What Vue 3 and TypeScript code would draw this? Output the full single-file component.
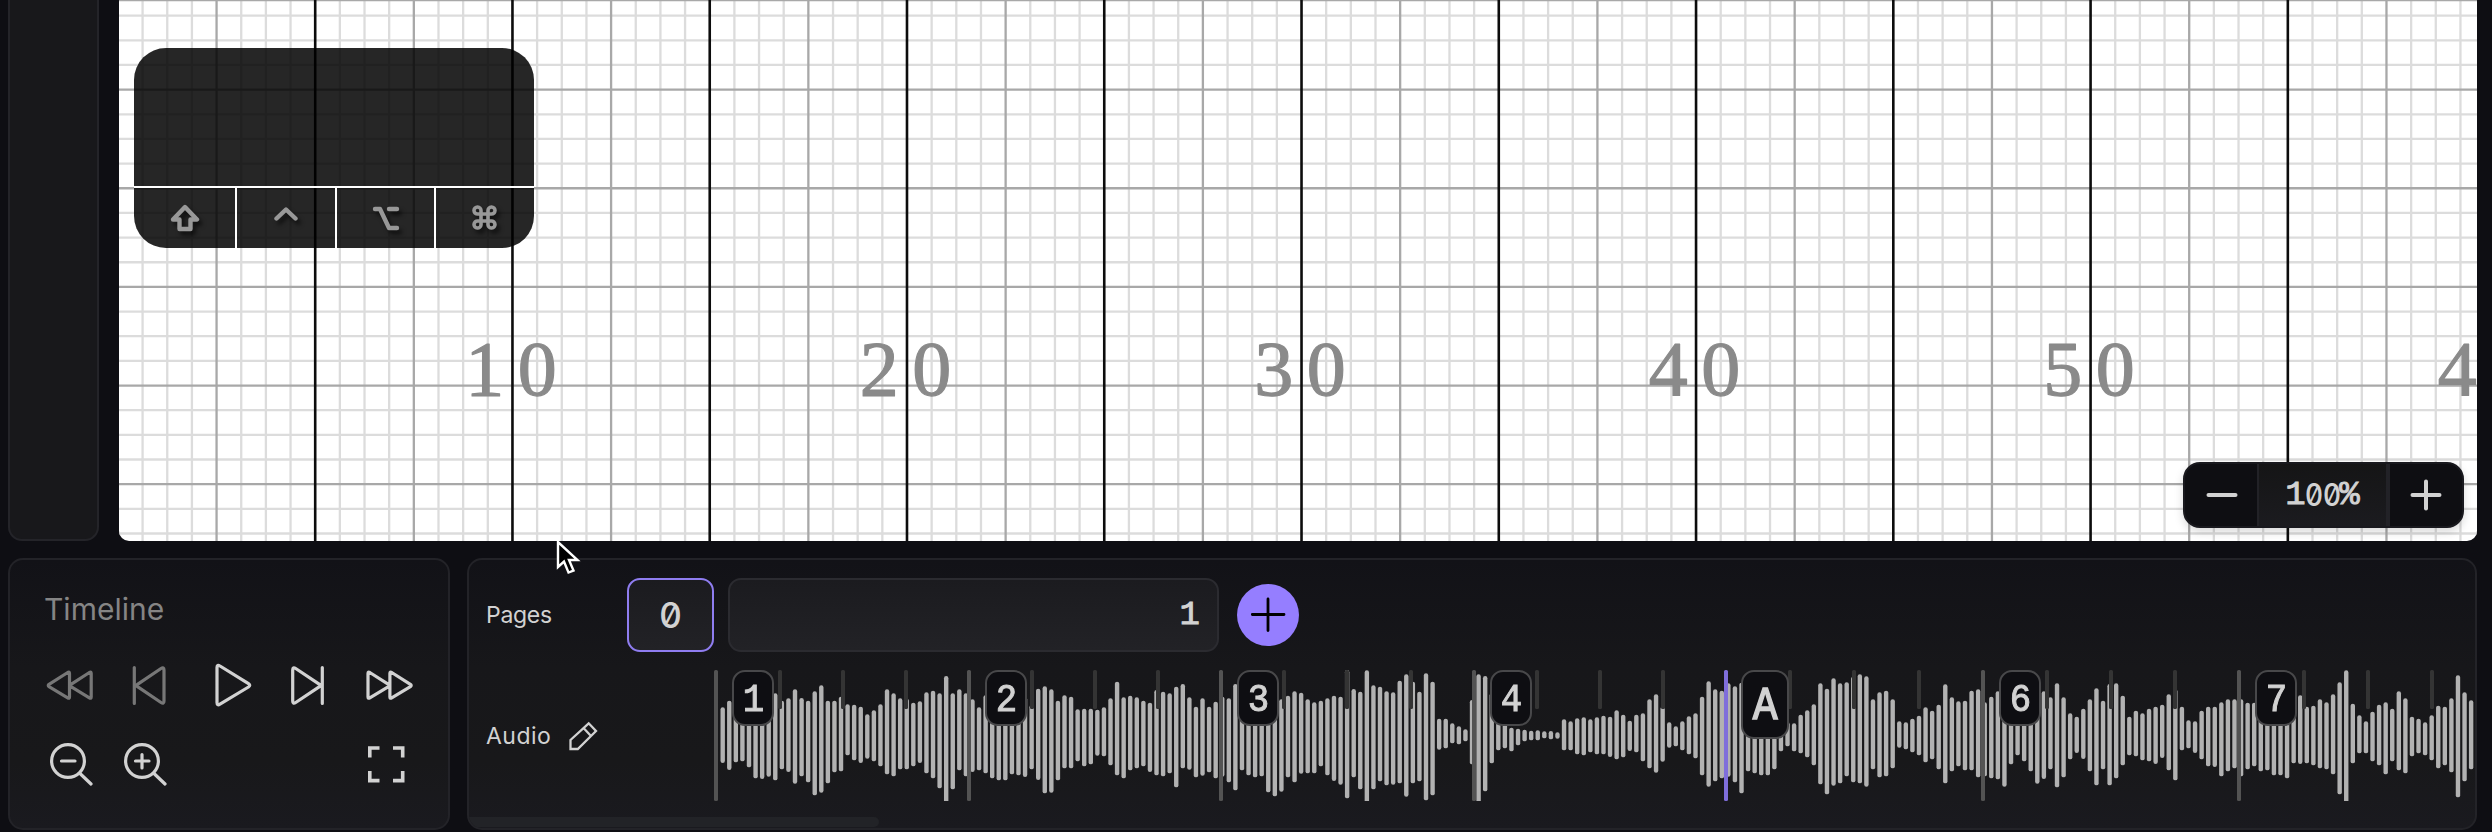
<script setup lang="ts">
interface Measure {
  x: number
  label: string
  section?: boolean
}

// Upper and lower end of every waveform bar, in thirds of a pixel.
const samples =
  '142,309 122,330 118,307 120,304 115,322 110,355 108,357 105,350 100,361 122,328 115,336 88,371 114,349 122,367 94,406 76,398 122,370 122,337 110,334 133,286 134,301 140,309 163,296 151,304 133,319 88,343 100,349 115,328 116,328 128,319 124,309 97,340 92,355 100,385 48,430 100,388 88,331 100,349 118,336 142,331 106,340 108,355 106,361 105,361 110,343 108,346 112,351 135,328 86,360 79,400 88,398 122,361 106,325 110,325 148,304 146,319 146,313 149,287 142,289 115,316 65,346 112,355 107,331 112,325 122,319 128,336 90,346 95,349 100,340 80,382 72,325 112,329 140,352 115,347 140,337 125,355 110,350 115,367 72,391 100,331 100,346 100,352 100,349 100,397 100,409 118,395 107,352 94,367 98,341 118,340 127,340 122,319 115,346 107,363 110,374 30,415 87,352 95,388 31,430 76,388 80,364 94,376 97,374 62,370 43,410 65,370 95,364 40,421 65,406 176,269 176,265 190,250 199,253 208,244 120,313 43,430 48,394 100,310 150,271 180,265 203,274 206,256 209,244 212,241 211,241 214,235 213,238 217,236 178,271 184,271 175,283 172,286 178,277 172,283 167,283 170,291 151,298 164,292 182,273 164,277 160,304 118,325 103,338 140,305 187,263 199,259 184,271 169,283 160,295 110,346 64,380 88,364 92,355 70,350 79,367 68,400 120,334 120,340 120,346 120,346 130,328 160,274 187,259 190,274 164,280 151,292 133,316 70,373 86,403 55,377 70,370 67,349 50,367 43,370 49,380 118,328 97,352 92,349 118,325 184,263 187,268 176,277 167,286 142,307 152,298 134,328 73,370 112,334 124,319 122,331 92,331 88,352 127,349 110,355 94,358 110,380 150,313 180,286 160,304 130,334 110,371 94,357 112,328 70,382 112,352 160,298 170,279 146,297 118,334 85,376 122,328 72,376 70,355 107,316 170,286 152,289 160,301 146,304 140,312 134,294 103,331 88,361 140,271 181,265 184,279 152,298 140,319 140,321 127,349 118,334 118,325 118,349 128,328 128,319 130,334 130,331 120,346 120,346 120,355 150,310 106,312 140,310 137,316 118,325 127,328 103,343 67,403 31,430 131,310 166,280 184,280 155,304 134,316 127,343 146,304 94,331 115,340 170,289 176,280 187,286 166,301 137,325 140,316 115,337 46,412 97,364 121,328'

const bars = samples.split(' ').map((pair, i) => {
  const [top, bottom] = pair.split(',').map(Number)
  return { x: 722.7 + i * 6.573 - 2.2, y: 660 + top / 3, h: (bottom - top) / 3 }
})

const measures: Measure[] = [
  { x: 716, label: '1' },
  { x: 969, label: '2' },
  { x: 1221, label: '3' },
  { x: 1474, label: '4' },
  { x: 1726, label: 'A', section: true },
  { x: 1983, label: '6' },
  { x: 2239, label: '7' },
]
const ticks = [780, 843, 906, 1032, 1095, 1158, 1284, 1347, 1411, 1537, 1600, 1663, 1790, 1854, 1919, 2047, 2111, 2175, 2304, 2368, 2432]

const step = 24.658
const columns = Array.from({ length: 97 }, (_, i) => ({
  x: 315.2 + (i - 8) * step,
  kind: i % 8 === 0 ? 'major' : i % 4 === 0 ? 'half' : 'minor',
})).filter((l) => l.x > 120)
const rows = Array.from({ length: 23 }, (_, i) => ({
  y: -9 + i * step,
  kind: i % 4 === 0 ? 'half' : 'minor',
}))
const yards = ['10', '20', '30', '40', '50', '4'].map((text, i) => ({ text, x: 465.2 + i * 394.53 }))
</script>

<template>
  <div class="app">
    <div class="upper">
      <aside class="side"></aside>
      <main class="field">
        <svg class="grid" viewBox="119 0 2358 541" width="2358" height="541">
          <line v-for="r in rows.filter((l) => l.kind === 'minor')" :key="'m' + r.y" class="minor" x1="119" x2="2478" :y1="r.y" :y2="r.y" />
          <line v-for="c in columns.filter((l) => l.kind === 'minor')" :key="'n' + c.x" class="minor" y1="0" y2="541" :x1="c.x" :x2="c.x" />
          <line v-for="r in rows.filter((l) => l.kind === 'half')" :key="'h' + r.y" class="half" x1="119" x2="2478" :y1="r.y" :y2="r.y" />
          <line class="half" x1="119" x2="2478" y1="0" y2="0" />
          <line v-for="c in columns.filter((l) => l.kind !== 'minor')" :key="'c' + c.x" :class="c.kind" y1="0" y2="541" :x1="c.x" :x2="c.x" />
          <text v-for="(t, i) in yards" :key="i" class="yard" :x="t.x" y="394.9">{{ t.text }}</text>
        </svg>

        <div class="keys">
          <div class="keys-screen"></div>
          <div class="mods">
            <div class="mod">
              <svg viewBox="0 0 32 32" width="32" height="32"><path d="M16 5 28 17.500H21.500V27H10.500V17.500H4Z" /></svg>
            </div>
            <div class="mod">
              <svg viewBox="0 0 32 32" width="32" height="32"><path d="M6.500 16.500 16 7.500 25.500 16.500" /></svg>
            </div>
            <div class="mod">
              <svg viewBox="0 0 32 32" width="32" height="32"><path d="M5 7H10L19 26H27M19 7H27" /></svg>
            </div>
            <div class="mod">
              <svg class="cmd" viewBox="0 0 32 32" width="32" height="32">
                <path d="M12 12H19V19H12ZM12 12H8.700A3.500 3.500 0 1 1 12 8.700ZM19 12V8.700A3.500 3.500 0 1 1 22.300 12ZM12 19V22.800A3.500 3.500 0 1 1 8.700 19ZM19 19H22.300A3.500 3.500 0 1 1 19 22.800Z" />
              </svg>
            </div>
          </div>
        </div>

        <div class="zoom">
          <button class="zoom-btn"><svg viewBox="0 0 36 36" width="36" height="36"><path d="M5.500 18H32.500" /></svg></button>
          <span class="zoom-value"><span class="one">1</span><span class="zero">0</span><span class="zero">0</span><span class="one">%</span></span>
          <button class="zoom-btn"><svg viewBox="0 0 36 36" width="36" height="36"><path d="M4.500 18H31.500M18 4.500V31.500" /></svg></button>
        </div>
      </main>
    </div>

    <div class="lower">
      <section class="panel controls">
        <h2>Timeline</h2>
        <div class="transport">
          <svg class="dim" viewBox="44 660 51 50" width="51" height="50"><path d="M69.500 673.500V697Q69.500 699 67.700 697.800L49 686.600Q47.500 685.500 49 684.400L67.700 672.500Q69.500 671.500 69.500 673.500ZM91.200 673.500V697Q91.200 699 89.400 697.800L71 686.600Q69.500 685.500 71 684.400L89.400 672.500Q91.200 671.500 91.200 673.500Z" /></svg>
          <svg class="dim" viewBox="131 660 40 50" width="40" height="50"><path d="M134.300 667.500V703.500M164 670V701Q164 704.500 161 702.500L137.500 686.700Q136 685.500 137.500 684.300L161 668.500Q164 666.500 164 670Z" /></svg>
          <svg viewBox="208 660 44 50" width="44" height="50"><path d="M217 667.500V702.500Q217 706 220 704.200L248.500 687Q251 685.300 248.500 683.700L220 666Q217 664 217 667.500Z" /></svg>
          <svg viewBox="288 660 40 50" width="40" height="50"><path d="M322.300 667.500V703.500M292.700 670V701Q292.700 704.500 295.700 702.500L319.500 686.700Q321 685.500 319.500 684.300L295.700 668.500Q292.700 666.500 292.700 670Z" /></svg>
          <svg viewBox="364 660 51 50" width="51" height="50"><path d="M368 673.500V697Q368 699 369.800 697.800L388.500 686.600Q390 685.500 388.500 684.400L369.800 672.500Q368 671.500 368 673.500ZM389.900 673.500V697Q389.900 699 391.700 697.800L410.400 686.600Q412 685.500 410.400 684.400L391.700 672.500Q389.900 671.500 389.900 673.500Z" /></svg>
        </div>
        <div class="zooms">
          <svg viewBox="46 740 50 50" width="50" height="50"><circle cx="68" cy="761" r="16.400" /><path d="M61.500 761H75M80 773.500 91 784" /></svg>
          <svg viewBox="120 740 50 50" width="50" height="50"><circle cx="142" cy="761" r="16.400" /><path d="M135.500 761H149M142 754.500V768M154 773.500 165 784" /></svg>
          <svg class="square" viewBox="362 740 50 50" width="50" height="50"><path d="M369.800 757.500V748H379.500M393 748H402.700V757.500M402.700 771V780.600H393M379.500 780.600H369.800V771" /></svg>
        </div>
      </section>

      <section class="panel tracks">
        <div class="row pages">
          <span class="name">Pages</span>
          <button class="page current"><span class="zero">0</span></button>
          <button class="page wide"><span class="one">1</span></button>
          <button class="add"><svg viewBox="0 0 40 40" width="40" height="40"><path d="M4.300 19.500H36M20 4V35.500" /></svg></button>
        </div>
        <div class="row audio">
          <span class="name">Audio</span>
          <svg class="pencil" viewBox="567 718 33 33" width="33" height="33"><path d="M570.500 739 588.700 722.300 596 730 577.800 748H570.500ZM583.500 727 591 735" /></svg>
          <div class="wave">
            <svg viewBox="714 670 1761 131" width="1761" height="131">
              <rect v-for="(b, i) in bars" :key="i" class="bar" :x="b.x" :y="b.y" width="4.400" :height="b.h" rx="2.200" />
              <rect v-for="t in ticks" :key="t" class="tick" :x="t - 2" y="670" width="4" height="39" rx="1.500" />
              <rect v-for="m in measures" :key="m.x" :class="['measure', { active: m.section }]" :x="m.x - 2" y="670" width="4" height="131" rx="1.500" />
            </svg>
            <span v-for="m in measures" :key="m.x" :class="['badge', { section: m.section }]" :style="{ left: m.x - 714 + (m.section ? 15 : 16) + 'px' }"><span>{{ m.label }}</span></span>
          </div>
        </div>
        <div class="scroll"></div>
      </section>
    </div>

    <svg class="cursor" viewBox="0 0 28 38" width="28" height="38"><path d="M3 3V28L9 22.500 13.500 33.500 18.500 31.500 14 21H22.500Z" /></svg>
  </div>
</template>

<style>
body {
  background: #0e0e13;
}
</style>

<style scoped>
.app {
  position: relative;
  box-sizing: border-box;
  width: 2492px;
  height: 832px;
  overflow: hidden;
  display: flex;
  flex-direction: column;
  gap: 17px;
  background: #0e0e13;
  color: #d2d2d2;
  font-family: Inter, "Liberation Sans", sans-serif;
}
.app * {
  box-sizing: border-box;
}
button {
  padding: 0;
  border: 0;
  background: none;
  color: inherit;
  font: inherit;
}
svg {
  display: block;
  fill: none;
  stroke: currentColor;
  stroke-width: 3.200;
  stroke-linecap: round;
  stroke-linejoin: round;
}
.upper {
  display: flex;
  gap: 20px;
  height: 541px;
  padding-left: 8px;
}
.side {
  width: 91px;
  border: 2px solid #242429;
  border-top: 0;
  border-radius: 0 0 14px 14px;
  background: #18181b;
}
.field {
  position: relative;
  width: 2358px;
  overflow: hidden;
  border-radius: 0 0 10px 10px;
  background: #fff;
}
.grid line {
  stroke-width: 2.300;
  stroke-linecap: butt;
}
.grid .minor {
  stroke: #dcdcdc;
}
.grid .half {
  stroke: #a8a8a8;
}
.grid .major {
  stroke: #0c0c0c;
  stroke-width: 2.600;
}
.yard {
  fill: #8a8a8a;
  stroke: #8a8a8a;
  stroke-width: 1.200px;
  font-family: "Liberation Serif", serif;
  font-size: 78px;
  letter-spacing: 13.500px;
}
.keys {
  position: absolute;
  left: 15px;
  top: 48px;
  width: 400px;
  height: 200px;
  overflow: hidden;
  border-radius: 32px;
  background: rgba(0, 0, 0, 0.85);
}
.keys-screen {
  height: 140px;
  border-bottom: 2px solid #fff;
}
.mods {
  display: flex;
  height: 60px;
}
.mod {
  flex: 1;
  display: grid;
  place-items: center;
  border-left: 2px solid #fff;
  color: #989898;
}
.mod:first-child {
  flex: 0 0 101px;
  border-left: 0;
}
.mod svg {
  margin: -1px 0 0 0;
  stroke-width: 4.400;
  filter: drop-shadow(3px 4px 2px rgba(0, 0, 0, 0.6));
}
.mod .cmd {
  stroke-width: 3.600;
}
.zoom {
  position: absolute;
  right: 13px;
  bottom: 13px;
  display: flex;
  width: 281px;
  height: 66px;
  overflow: hidden;
  border: 2px solid #19191e;
  border-radius: 17px;
  background: #0e0e12;
  box-shadow: 0 4px 10px rgba(0, 0, 0, 0.15);
}
.zoom-btn {
  width: 73px;
  display: grid;
  place-items: center;
}
.zoom-btn svg {
  stroke-width: 4;
}
.zoom-value {
  width: 133px;
  display: flex;
  justify-content: center;
  align-items: center;
  border: solid #222227;
  border-width: 0 4px 0 2px;
  background: linear-gradient(#151516, #1b1b1f);
}
.zoom-value span {
  width: 18px;
  display: flex;
  justify-content: center;
}
.one {
  font-family: "Liberation Mono", monospace;
  font-size: 34px;
  -webkit-text-stroke: 0.900px currentColor;
}
.zero {
  font-size: 35px;
  font-weight: 500;
  font-feature-settings: "zero";
}
.zoom-value .zero {
  font-size: 31px;
  transform: translateY(-1px) scaleX(0.900);
}
.lower {
  display: flex;
  gap: 17px;
  height: 272px;
  padding-left: 8px;
}
.panel {
  height: 272px;
  border: 2px solid #232328;
  border-radius: 15px;
  background: linear-gradient(#121217, #17171a 40%, #18181a 75%, #1a1a1f);
}
.controls {
  width: 442px;
}
h2 {
  margin: 31px 0 0 34px;
  color: #858585;
  font-size: 30px;
  font-weight: 400;
  line-height: 36px;
}
.transport {
  display: flex;
  justify-content: space-between;
  width: 371px;
  margin: 33px 0 0 34px;
}
.dim {
  color: #777;
}
.zooms {
  display: flex;
  gap: 24px;
  width: 366px;
  margin: 30px 0 0 36px;
}
.zooms .square {
  margin-left: auto;
  stroke-width: 3.600;
  stroke-linecap: butt;
  stroke-linejoin: miter;
}
.tracks {
  position: relative;
  width: 2010px;
  overflow: hidden;
}
.row {
  display: flex;
  padding-left: 17px;
}
.name {
  font-size: 23px;
  line-height: 28px;
}
.pages {
  align-items: center;
  height: 74px;
  margin-top: 18px;
}
.pages .name {
  width: 141px;
  letter-spacing: -0.300px;
}
.page {
  height: 74px;
  border: 2px solid #2b2b30;
  border-radius: 13px;
  background: linear-gradient(#1b1b1f, #222226);
}
.current {
  width: 87px;
  border-color: #8f7df0;
  margin-right: 14px;
}
.wide {
  width: 491px;
  padding-right: 17px;
  text-align: right;
}
.add {
  width: 62px;
  height: 62px;
  margin-left: 18px;
  display: grid;
  place-items: center;
  border-radius: 50%;
  background: #957eff;
  color: #000;
}
.add svg {
  stroke-width: 2.800;
}
.audio {
  align-items: center;
  height: 131px;
  margin-top: 18px;
}
.audio .name {
  width: 81px;
  letter-spacing: 0.500px;
}
.pencil {
  stroke-width: 2.300;
  stroke-linejoin: miter;
}
.wave {
  position: relative;
  margin-left: 114px;
}
.wave rect {
  stroke: none;
}
.bar {
  fill: #b2b2b2;
}
.tick {
  fill: #343434;
}
.measure {
  fill: #535353;
}
.measure.active {
  fill: #7f6edb;
}
.badge {
  position: absolute;
  top: 0;
  display: flex;
  justify-content: center;
  width: 42px;
  height: 56px;
  border: 2px solid #48484a;
  border-radius: 13px;
  background: #0e0e12;
  font-family: "Liberation Mono", monospace;
  font-size: 38px;
  line-height: 57px;
  -webkit-text-stroke: 1px currentColor;
}
.badge span {
  transform: scaleX(0.940);
}
.badge.section {
  width: 48px;
  height: 69px;
  font-size: 47px;
  line-height: 70px;
  -webkit-text-stroke-width: 1.500px;
}
.badge.section span {
  transform: scaleX(0.880);
}
.scroll {
  position: absolute;
  left: 0;
  bottom: 1px;
  width: 410px;
  height: 10px;
  border-radius: 0 6px 6px 0;
  background: #222327;
}
.cursor {
  position: absolute;
  left: 555px;
  top: 539px;
  fill: #000;
  stroke: #fff;
  stroke-width: 2.400;
  stroke-linejoin: miter;
}
</style>
